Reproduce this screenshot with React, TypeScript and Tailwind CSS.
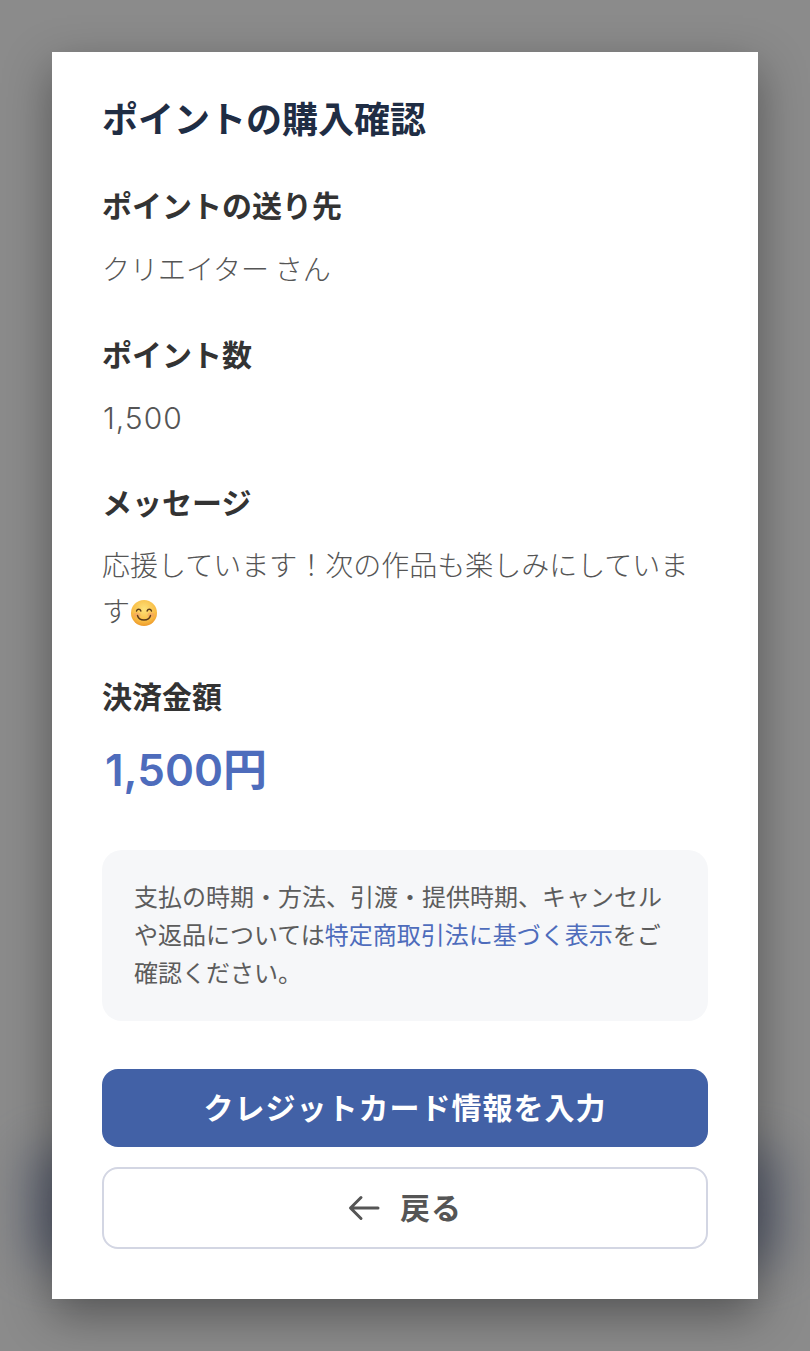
function Label({ children }: { children: React.ReactNode }) {
  return <h3 className="text-[30px] leading-[42px] font-bold text-[#333333]">{children}</h3>
}

function Smile() {
  return (
    <svg className="inline-block align-[-5px] w-[28px] h-[28px]" viewBox="0 0 28 28">
      <defs>
        <radialGradient id="face" cx="50%" cy="35%" r="65%">
          <stop offset="0%" stopColor="#fde27a" />
          <stop offset="70%" stopColor="#f9bd45" />
          <stop offset="100%" stopColor="#ee9a2a" />
        </radialGradient>
      </defs>
      <circle cx="14" cy="14" r="13" fill="url(#face)" />
      <ellipse cx="7" cy="16" rx="3.5" ry="2.5" fill="#f5956b" opacity="0.45" />
      <ellipse cx="21" cy="16" rx="3.5" ry="2.5" fill="#f5956b" opacity="0.45" />
      <path d="M6.5 12c.8-2.4 3.6-2.4 4.4 0M17.100 12c.8-2.400 3.600-2.400 4.400 0" fill="none" stroke="#5a3a1a" strokeWidth="1.400" strokeLinecap="round" />
      <path d="M7.500 16.500c1.500 6 11.500 6 13 0" fill="none" stroke="#5a3a1a" strokeWidth="1.400" strokeLinecap="round" />
    </svg>
  )
}

export default function App() {
  return (
    <div className="min-h-[1351px] bg-[#8b8b8b] pt-[52px] font-['Inter','Noto_Sans_CJK_JP',sans-serif] overflow-hidden">
      <div className="relative mx-[52px] w-[706px] h-[1247px]">
        {/* sombra azulada detras del pie */}
        <div className="absolute -left-[22px] -right-[22px] top-[1100px] h-[110px] bg-[#38425e] opacity-55 blur-[24px]" />
        <div className="relative h-full bg-white px-[50px] pt-[44px] shadow-[0_16px_44px_rgba(0,0,0,0.38)]">
          <h2 className="text-[36px] leading-[48px] font-bold text-[#1f2d44]">ポイントの購入確認</h2>

          <div className="mt-[41px]">
            <Label>ポイントの送り先</Label>
            <p className="mt-[20px] text-[28px] leading-[46px] font-light text-[#555555] [word-spacing:-2px]">クリエイター さん</p>
          </div>

          <div className="mt-[41px]">
            <Label>ポイント数</Label>
            <p className="mt-[19px] pl-[1px] text-[30px] leading-[46px] font-light tracking-[1px] text-[#555555]">1,500</p>
          </div>

          <div className="mt-[41px]">
            <Label>メッセージ</Label>
            <p className="mt-[19px] text-[28px] leading-[46px] font-light text-[#555555]">
              応援しています！次の作品も楽しみにしています
              <Smile />
            </p>
          </div>

          <div className="mt-[41px]">
            <Label>決済金額</Label>
            <p className="mt-[22px] pl-[3px] text-[44px] leading-[60px] font-semibold text-[#4e6cbc]">1,500円</p>
          </div>

          <div className="mt-[50px] rounded-[20px] bg-[#f6f7f9] px-[32px] pt-[29px] pb-[28px] text-[24px] leading-[38px] text-[#5c5c5c]">
            支払の時期・方法、引渡・提供時期、キャンセルや返品については
            <span className="text-[#4e6cbc]">特定商取引法に基づく表示</span>
            をご確認ください。
          </div>

          <button className="mt-[48px] block w-full h-[78px] rounded-[16px] bg-[#4261a6] text-[30px] font-bold tracking-[1px] text-white">
            クレジットカード情報を入力
          </button>

          <button className="mt-[20px] flex w-full h-[82px] items-center justify-center gap-[20px] rounded-[16px] border-2 border-[#d3d6e3] bg-white text-[30px] font-bold tracking-[1px] text-[#555555]">
            <svg className="w-[32px] h-[26px]" viewBox="0 0 32 26" fill="none" stroke="#555555" strokeWidth="3" strokeLinecap="round" strokeLinejoin="round">
              <path d="M30 13H3M13 2.500 2.500 13 13 23.500" />
            </svg>
            戻る
          </button>
        </div>
      </div>
    </div>
  )
}
